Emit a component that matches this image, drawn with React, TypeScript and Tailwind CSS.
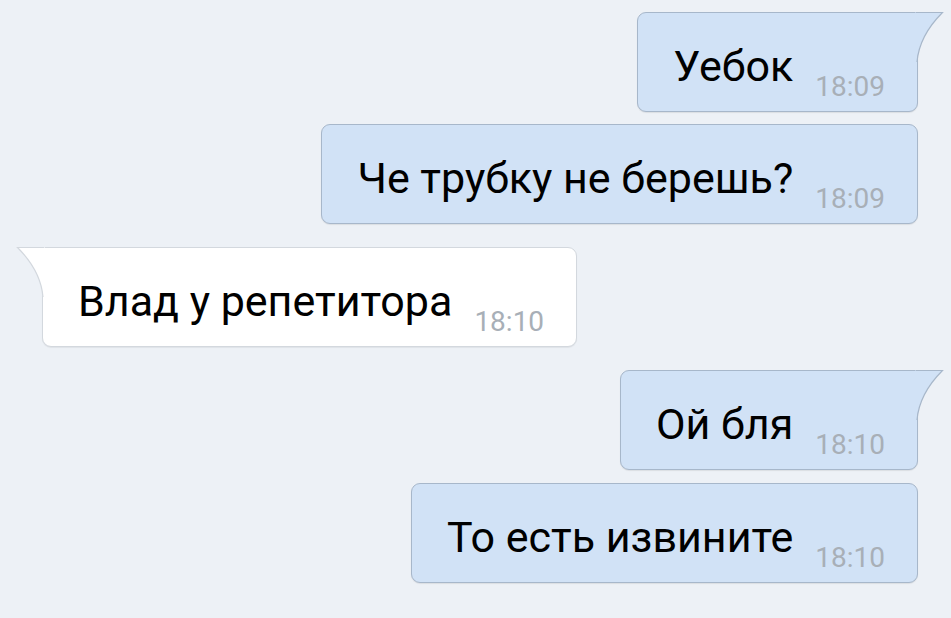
import React from "react";

const OUT_FILL = "#d1e2f6";
const OUT_BORDER = "#a7b7ca";
const IN_FILL = "#ffffff";
const IN_BORDER = "#d3d8de";

function TailRight() {
  return (
    <svg
      className="absolute left-full top-[-1px]"
      width="30"
      height="52"
      viewBox="0 0 30 52"
      style={{ marginLeft: -2 }}
    >
      <path d="M0 0.5 L27.5 0.5 C 18 10, 4 26, 2 50 L0 50 Z" fill={OUT_FILL} />
      <path d="M1 0.5 L27.5 0.5 C 18 10, 4 26, 2 50" fill="none" stroke={OUT_BORDER} strokeWidth="1.2" />
    </svg>
  );
}

function TailLeft() {
  return (
    <svg
      className="absolute right-full top-[-1px]"
      width="30"
      height="52"
      viewBox="0 0 30 52"
      style={{ marginRight: -2 }}
    >
      <path d="M30 0.5 L2.5 0.5 C 12 10, 26 26, 28 50 L30 50 Z" fill={IN_FILL} />
      <path d="M29 0.5 L2.5 0.5 C 12 10, 26 26, 28 50" fill="none" stroke={IN_BORDER} strokeWidth="1.2" />
    </svg>
  );
}

function Bubble({
  text,
  time,
  out,
  tail,
}: {
  text: string;
  time: string;
  out: boolean;
  tail?: boolean;
}) {
  const base =
    "relative h-[100px] flex items-start pl-[35px] pr-[32px] border " +
    (out
      ? "bg-[#d1e2f6] border-[#a7b7ca] rounded-[9px] shadow-[0_1px_1px_rgba(0,0,0,0.08)]"
      : "bg-white border-[#d3d8de] rounded-[9px] shadow-[0_1px_1px_rgba(0,0,0,0.06)]");
  const corner = tail ? (out ? " rounded-tr-none" : " rounded-tl-none") : "";
  return (
    <div className={base + corner}>
      {tail && (out ? <TailRight /> : <TailLeft />)}
      <span className="mt-[28px] text-[43px] leading-[50px] text-black">{text}</span>
      <span className="ml-[22px] mt-[58px] text-[28px] leading-[32px] text-[#a8afb7]">{time}</span>
    </div>
  );
}

export default function App() {
  return (
    <div
      className="w-[951px] h-[618px] bg-[#edf1f6] overflow-hidden flex flex-col"
      style={{ fontFamily: "Roboto, 'Noto Sans', sans-serif" }}
    >
      <div className="flex flex-col items-end pr-[33px] pt-[12px] gap-[12px]">
        <Bubble text="Уебок" time="18:09" out tail />
        <Bubble text="Че трубку не берешь?" time="18:09" out />
      </div>
      <div className="flex flex-col items-start pl-[42px] pt-[23px]">
        <Bubble text="Влад у репетитора" time="18:10" out={false} tail />
      </div>
      <div className="flex flex-col items-end pr-[33px] pt-[23px] gap-[13px]">
        <Bubble text="Ой бля" time="18:10" out tail />
        <Bubble text="То есть извините" time="18:10" out />
      </div>
    </div>
  );
}
